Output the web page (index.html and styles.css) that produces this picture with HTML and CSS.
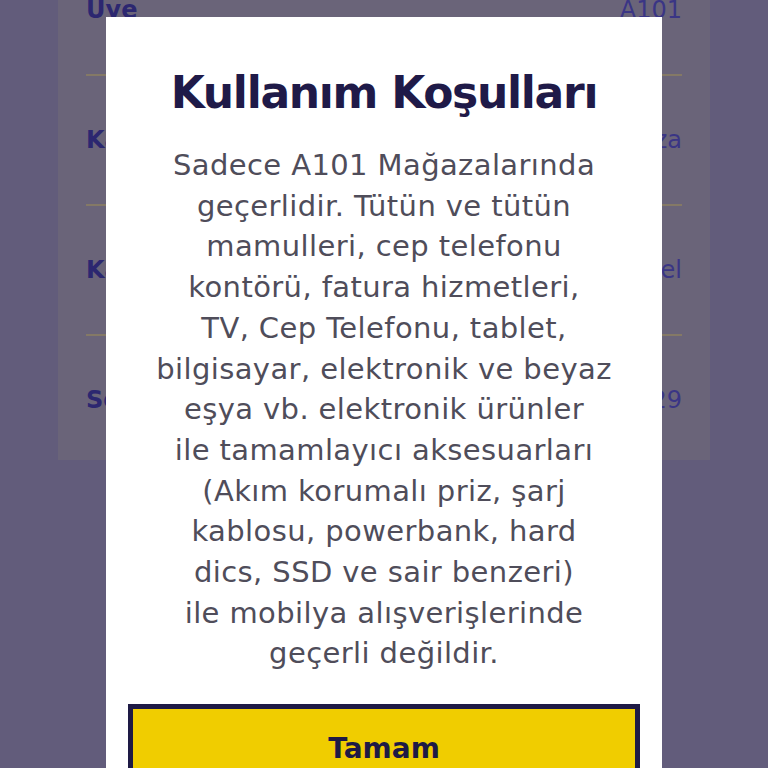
FILE: index.html
```html
<!DOCTYPE html>
<html lang="tr">
<head>
<meta charset="utf-8">
<link rel="stylesheet" href="styles.css">
</head>
<body>
<div class="page">
  <div class="card">
    <div class="row first"><span class="label">Üye</span><span class="value">A101</span></div>
    <div class="row"><span class="label">Kampanya</span><span class="value">Mağaza</span></div>
    <div class="row"><span class="label">Kanal</span><span class="value">Genel</span></div>
    <div class="row last"><span class="label">Son Tarih</span><span class="value">2029</span></div>
  </div>
</div>
<div class="overlay">
  <div class="modal">
    <h1 class="title">Kullanım Koşulları</h1>
    <p class="text">Sadece A101 Mağazalarında<br>geçerlidir. Tütün ve tütün<br>mamulleri, cep telefonu<br>kontörü, fatura hizmetleri,<br>TV, Cep Telefonu, tablet,<br>bilgisayar, elektronik ve beyaz<br>eşya vb. elektronik ürünler<br>ile tamamlayıcı aksesuarları<br>(Akım korumalı priz, şarj<br>kablosu, powerbank, hard<br>dics, SSD ve sair benzeri)<br>ile mobilya alışverişlerinde<br>geçerli değildir.</p>
    <button class="btn">Tamam</button>
  </div>
</div>
</body>
</html>
```
FILE: styles.css
```css
html, body {
  margin: 0;
  padding: 0;
}
body {
  width: 768px;
  height: 768px;
  overflow: hidden;
  background: #625c7b;
  font-family: "DejaVu Sans", sans-serif;
  position: relative;
}
.page {
  padding: 0 58px;
}
.card {
  background: #6a6479;
  height: 514px;
  padding: 0 28px;
  margin-top: -54px;
}
.row {
  display: flex;
  justify-content: space-between;
  align-items: center;
  height: 128px;
  border-bottom: 2px solid #847966;
  font-size: 24px;
  color: #2c2770;
}
.row.last {
  border-bottom: none;
}
.label {
  font-weight: bold;
}
.value {
  color: #3a3585;
}
.overlay {
  position: absolute;
  left: 0;
  top: 0;
  width: 768px;
  height: 768px;
}
.modal {
  position: absolute;
  left: 106px;
  top: 17px;
  width: 556px;
  height: 800px;
  background: #ffffff;
  box-sizing: border-box;
  padding: 45px 22px 0;
  text-align: center;
}
.title {
  margin: 0;
  font-size: 44px;
  line-height: 62px;
  font-weight: bold;
  color: #1f1a48;
  letter-spacing: -1.3px;
}
.text {
  margin: 21px 0 0;
  font-size: 29px;
  line-height: 40.7px;
  color: #4f4d5a;
  white-space: nowrap;
  letter-spacing: 0.4px;
}
.btn {
  display: block;
  width: 100%;
  margin-top: 30px;
  height: 90px;
  border: 5px solid #1e1a45;
  background: #f0cd00;
  color: #1e1a45;
  font-family: "DejaVu Sans", sans-serif;
  font-weight: bold;
  font-size: 28px;
  line-height: 80px;
  padding: 0;
  border-radius: 0;
}
```
